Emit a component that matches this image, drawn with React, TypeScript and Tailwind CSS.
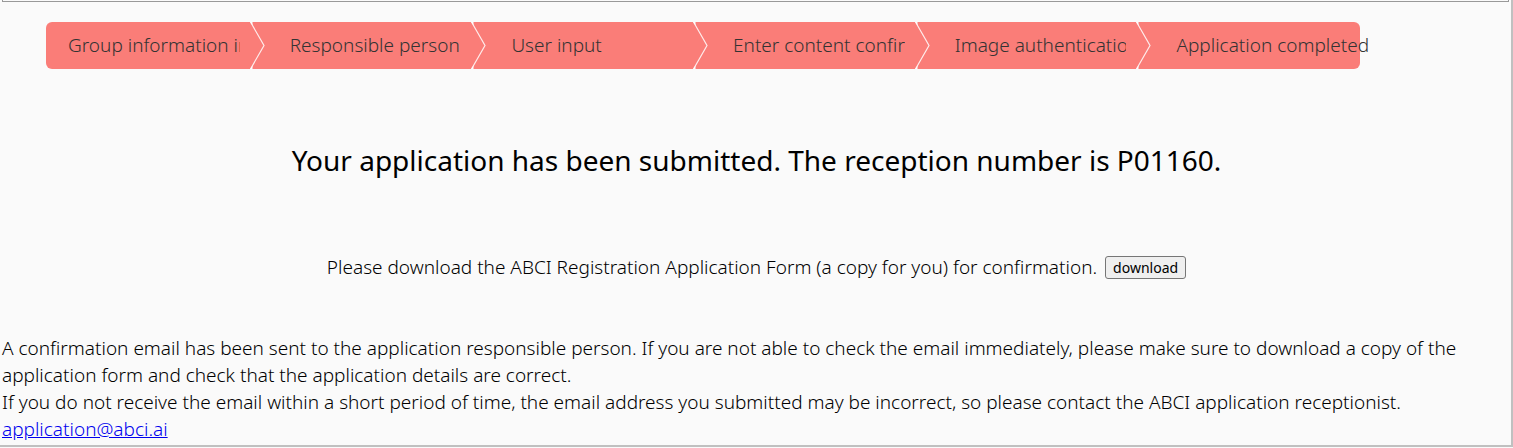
const steps = [
  "Group information input",
  "Responsible person",
  "User input",
  "Enter content confirmation",
  "Image authentication",
  "Application completed",
];

function StepDivider() {
  return (
    <svg
      className="absolute top-0 -left-0.5 h-full w-4"
      viewBox="0 0 16 47"
      preserveAspectRatio="none"
      aria-hidden="true"
    >
      <path d="M0 0H2.5V3.5L0 0ZM0 47H2.5V43.5L0 47Z" fill="#fafafa" />
      <path d="M0.5 0L14 23.5L0.5 47" fill="none" stroke="#fff" strokeOpacity="0.85" strokeWidth="1.2" />
    </svg>
  );
}

export default function App() {
  return (
    <main className="min-h-screen bg-[#fafafa] font-['Noto_Sans',sans-serif] text-[19px] leading-[27px] font-light text-black">
      <div className="border-r-2 border-b-2 border-[#c0c0c0] pl-0.5">
        <div className="mr-0.5 h-0.5 border-x border-b border-[#999]" />

        <ol className="mt-5 mr-[10%] ml-11 flex">
          {steps.map((step, i) => {
            const first = i === 0;
            const last = i === steps.length - 1;
            return (
              <li
                key={step}
                className={`relative min-w-0 flex-1 bg-[#fa7d78] py-2.5 pr-3 text-[#333] ${
                  first ? "rounded-l-md pl-[22px]" : "pl-[38px]"
                } ${last ? "rounded-r-md" : ""}`}
              >
                {!first && <StepDivider />}
                <span className={`block whitespace-nowrap ${last ? "overflow-visible" : "overflow-hidden"}`}>
                  {step}
                </span>
              </li>
            );
          })}
        </ol>

        <h1 className="mt-[71px] text-center text-[28px] leading-10 font-normal">
          Your application has been submitted. The reception number is P01160.
        </h1>

        <p className="mt-[74px] flex items-center justify-center gap-2">
          Please download the ABCI Registration Application Form (a copy for you) for confirmation.
          <button
            type="button"
            className="rounded-[3px] border border-[#767676] bg-[#efefef] px-[7px] text-[14px] leading-[21px] font-normal"
          >
            download
          </button>
        </p>

        <p className="mt-[54px]">
          A confirmation email has been sent to the application responsible person. If you are not able to check the
          email immediately, please make sure to download a copy of the application form and check that the application
          details are correct.
        </p>
        <p>
          If you do not receive the email within a short period of time, the email address you submitted may be
          incorrect, so please contact the ABCI application receptionist.
        </p>
        <p className="pb-0.5">
          <a href="mailto:application@abci.ai" className="text-[#0000ee] underline">
            application@abci.ai
          </a>
        </p>
      </div>
    </main>
  );
}
